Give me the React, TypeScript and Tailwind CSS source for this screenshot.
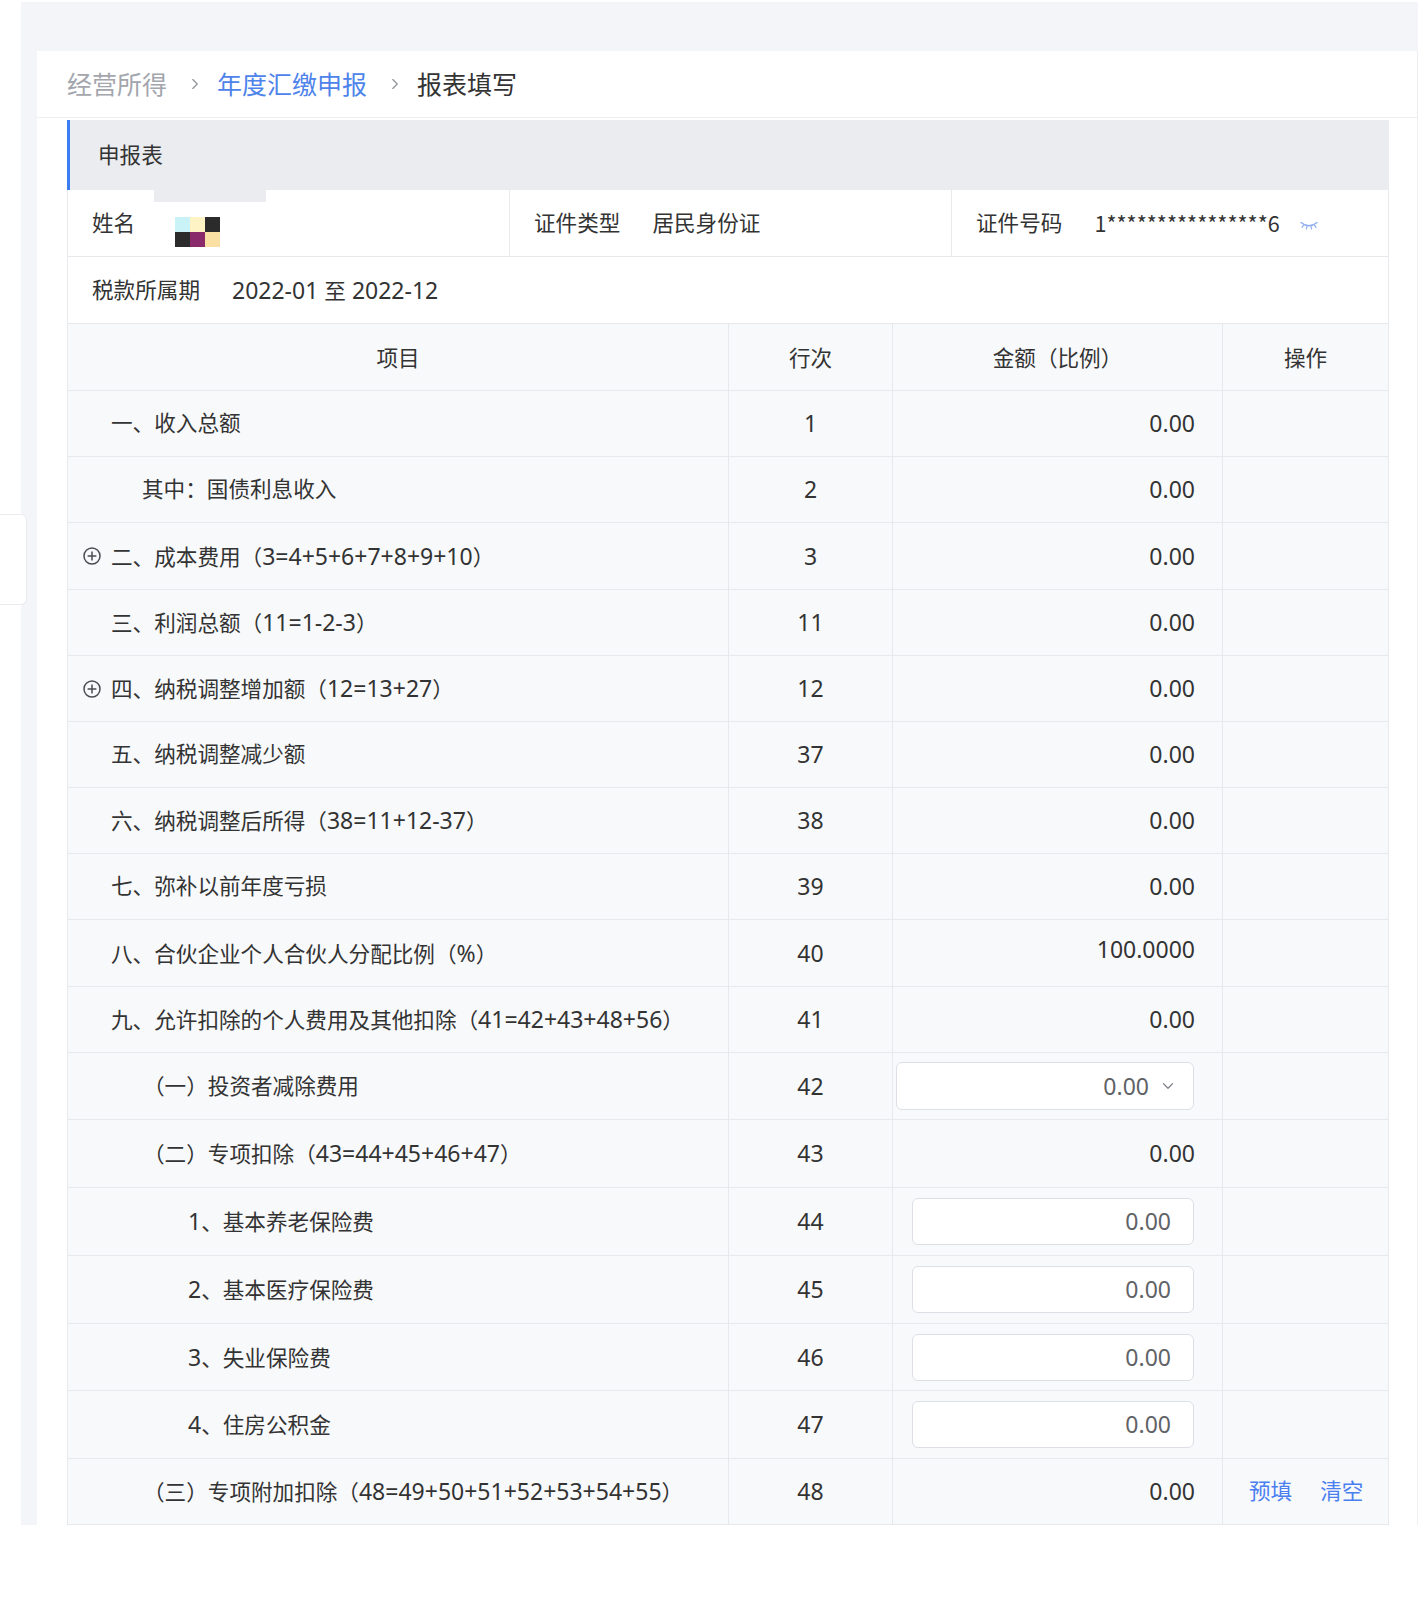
import { ChevronRight, ChevronDown } from 'lucide-react'

type Row = {
  label: string
  no: string
  indent: 0 | 1 | 2 | 3
  expand?: boolean
  amount?: string
  kind?: 'text' | 'select' | 'input'
  h: string
  ops?: boolean
  raised?: boolean
}

const rows: Row[] = [
  { label: '一、收入总额', no: '1', indent: 0, amount: '0.00', h: 'h-[66px]' },
  { label: '其中：国债利息收入', no: '2', indent: 1, amount: '0.00', h: 'h-[66px]' },
  { label: '二、成本费用（3=4+5+6+7+8+9+10）', no: '3', indent: 0, expand: true, amount: '0.00', h: 'h-[67px]' },
  { label: '三、利润总额（11=1-2-3）', no: '11', indent: 0, amount: '0.00', h: 'h-[66px]' },
  { label: '四、纳税调整增加额（12=13+27）', no: '12', indent: 0, expand: true, amount: '0.00', h: 'h-[66px]' },
  { label: '五、纳税调整减少额', no: '37', indent: 0, amount: '0.00', h: 'h-[66px]' },
  { label: '六、纳税调整后所得（38=11+12-37）', no: '38', indent: 0, amount: '0.00', h: 'h-[66px]' },
  { label: '七、弥补以前年度亏损', no: '39', indent: 0, amount: '0.00', h: 'h-[66px]' },
  { label: '八、合伙企业个人合伙人分配比例（%）', no: '40', indent: 0, amount: '100.0000', h: 'h-[67px]', raised: true },
  { label: '九、允许扣除的个人费用及其他扣除（41=42+43+48+56）', no: '41', indent: 0, amount: '0.00', h: 'h-[66px]' },
  { label: '（一）投资者减除费用', no: '42', indent: 2, amount: '0.00', kind: 'select', h: 'h-[67px]' },
  { label: '（二）专项扣除（43=44+45+46+47）', no: '43', indent: 2, amount: '0.00', h: 'h-[68px]' },
  { label: '1、基本养老保险费', no: '44', indent: 3, amount: '0.00', kind: 'input', h: 'h-[68px]' },
  { label: '2、基本医疗保险费', no: '45', indent: 3, amount: '0.00', kind: 'input', h: 'h-[68px]' },
  { label: '3、失业保险费', no: '46', indent: 3, amount: '0.00', kind: 'input', h: 'h-[67px]' },
  { label: '4、住房公积金', no: '47', indent: 3, amount: '0.00', kind: 'input', h: 'h-[68px]' },
  { label: '（三）专项附加扣除（48=49+50+51+52+53+54+55）', no: '48', indent: 2, amount: '0.00', h: 'h-[66px]', ops: true },
]

const indentClass = ['pl-[43px]', 'pl-[74px]', 'pl-[75px]', 'pl-[120px]']

// latin runs are drawn a bit larger so digits match the original's proportions
function Mixed({ text }: { text: string }) {
  const parts = text.split(/([\x20-\x7e]+)/)
  return (
    <>
      {parts.map((p, i) =>
        /^[\x20-\x7e]+$/.test(p) ? (
          <span key={i} className="text-[23px]">
            {p}
          </span>
        ) : (
          p
        ),
      )}
    </>
  )
}

function PlusCircle() {
  return (
    <svg width="18" height="18" viewBox="0 0 18 18" fill="none" className="shrink-0">
      <circle cx="9" cy="9" r="8" stroke="#4a4d52" strokeWidth="1.5" />
      <path d="M9 4.6v8.8M4.6 9h8.8" stroke="#4a4d52" strokeWidth="1.5" />
    </svg>
  )
}

function EyeClosed() {
  return (
    <svg width="20" height="10" viewBox="0 0 20 10" fill="none">
      <path d="M2 2.5Q10 9 18 2.5" stroke="#8eacf2" strokeWidth="1.3" strokeLinecap="round" />
      <path d="M4.5 5.2L3 7.5M8 6.6L7.4 9M12 6.6l.6 2.4M15.5 5.2L17 7.5" stroke="#8eacf2" strokeWidth="1.2" strokeLinecap="round" />
    </svg>
  )
}

function Avatar() {
  const cells = ['bg-[#c9f3f6]', 'bg-[#fdf3c4]', 'bg-[#2b2b2b]', 'bg-[#2b2b2b]', 'bg-[#8b2a6a]', 'bg-[#fbe0a4]']
  return (
    <div className="grid grid-cols-[15px_15px_15px] grid-rows-[15px_15px] mt-[27px]">
      {cells.map((c, i) => (
        <div key={i} className={c} />
      ))}
    </div>
  )
}

export default function App() {
  return (
    <div className="relative w-[1424px] min-h-[1608px] bg-white font-['Noto_Sans','Noto_Sans_CJK_SC',sans-serif] text-[#333]">
      <div className="ml-[21px] mt-[2px] w-[1397px] bg-[#f4f5f8] pt-[49px] pl-[16px]">
        {/* Breadcrumb */}
        <div className="h-[67px] bg-white border-b border-r border-[#eceef1] flex items-center pl-[30px] text-[25px] font-['Noto_Sans_CJK_SC',sans-serif]">
          <span className="text-[#a3a6ad]">经营所得</span>
          <ChevronRight size={18} strokeWidth={1.5} className="ml-[19px] mr-[13px] text-[#8d9096]" />
          <span className="text-[#4d83ea]">年度汇缴申报</span>
          <ChevronRight size={18} strokeWidth={1.5} className="ml-[19px] mr-[13px] text-[#8d9096]" />
          <span className="text-[#333]">报表填写</span>
        </div>

        {/* Main card */}
        <div className="bg-white pl-[30px] pr-[28px] pt-[2px] border-r border-[#eef0f3]">
          {/* Section header */}
          <div className="h-[70px] bg-[#ebecef] border-l-[3px] border-[#3b7ef4] flex items-center pl-[28px] text-[21.6px] text-[#333]">
            申报表
          </div>

          {/* Info rows */}
          <div className="border-l border-r border-[#e7e9ec] text-[21.6px]">
            <div className="h-[67px] grid grid-cols-[442px_442px_1fr] border-b border-[#e7e9ec]">
              <div className="relative flex items-center pl-[24px] border-r border-[#e7e9ec]">
                <div className="absolute left-[86px] top-0 w-[112px] h-[12px] bg-[#ebecef]" />
                <span>姓名</span>
                <div className="ml-[40px] self-start">
                  <Avatar />
                </div>
              </div>
              <div className="flex items-center pl-[24px] border-r border-[#e7e9ec]">
                <span>证件类型</span>
                <span className="ml-[32px]">居民身份证</span>
              </div>
              <div className="flex items-center pl-[24px]">
                <span>证件号码</span>
                <span className="ml-[32px] font-['Noto_Sans_CJK_SC',sans-serif]">1****************6</span>
                <span className="ml-[19px] mt-[4px]">
                  <EyeClosed />
                </span>
              </div>
            </div>
            <div className="h-[67px] flex items-center pl-[24px] border-b border-[#e7e9ec]">
              <span>税款所属期</span>
              <span className="ml-[32px]">
                <Mixed text="2022-01 至 2022-12" />
              </span>
            </div>
          </div>

          {/* Table */}
          <div className="border-l border-r border-[#e7e9ec] bg-[#f8f9fb] text-[21.6px]">
            <div className="h-[67px] grid grid-cols-[661px_164px_330px_1fr] border-b border-[#e7e9ec]">
              <div className="flex items-center justify-center pt-[2px] border-r border-[#e7e9ec]">项目</div>
              <div className="flex items-center justify-center pt-[2px] border-r border-[#e7e9ec]">行次</div>
              <div className="flex items-center justify-center pt-[2px] border-r border-[#e7e9ec]">金额（比例）</div>
              <div className="flex items-center justify-center pt-[2px]">操作</div>
            </div>
            {rows.map((r) => (
              <div key={r.no} className={`${r.h} grid grid-cols-[661px_164px_330px_1fr] border-b border-[#e7e9ec]`}>
                <div
                  className={`flex items-center border-r border-[#e7e9ec] ${r.expand ? 'pl-[15px]' : indentClass[r.indent]}`}
                >
                  {r.expand && (
                    <span className="mr-[10px]">
                      <PlusCircle />
                    </span>
                  )}
                  <span>
                    <Mixed text={r.label} />
                  </span>
                </div>
                <div className="flex items-center justify-center border-r border-[#e7e9ec] text-[23px]">{r.no}</div>
                <div className="flex items-center justify-end pr-[27px] border-r border-[#e7e9ec] text-[23px]">
                  {r.kind === 'select' && (
                    <div className="mr-[1px] w-[298px] h-[48px] bg-white border border-[#dcdfe6] rounded-[6px] flex items-center justify-end pr-[16px] text-[#606266]">
                      <span>{r.amount}</span>
                      <ChevronDown size={18} strokeWidth={1.6} className="ml-[10px] text-[#80838a]" />
                    </div>
                  )}
                  {r.kind === 'input' && (
                    <div className="mr-[1px] w-[282px] h-[47px] bg-white border border-[#dcdfe6] rounded-[6px] flex items-center justify-end pr-[22px] text-[#606266]">
                      {r.amount}
                    </div>
                  )}
                  {!r.kind && <span className={r.raised ? 'mb-[8px]' : ''}>{r.amount}</span>}
                </div>
                <div className="flex items-center pl-[26px] gap-[28px] text-[#4b7ff0]">
                  {r.ops && (
                    <>
                      <span>预填</span>
                      <span>清空</span>
                    </>
                  )}
                </div>
              </div>
            ))}
          </div>
        </div>
      </div>

      {/* collapsed side handle */}
      <div className="absolute left-0 top-[512px] w-[27px] h-[91px] bg-white border border-l-0 border-[#e9ebee] rounded-r-[6px]" />
    </div>
  )
}
